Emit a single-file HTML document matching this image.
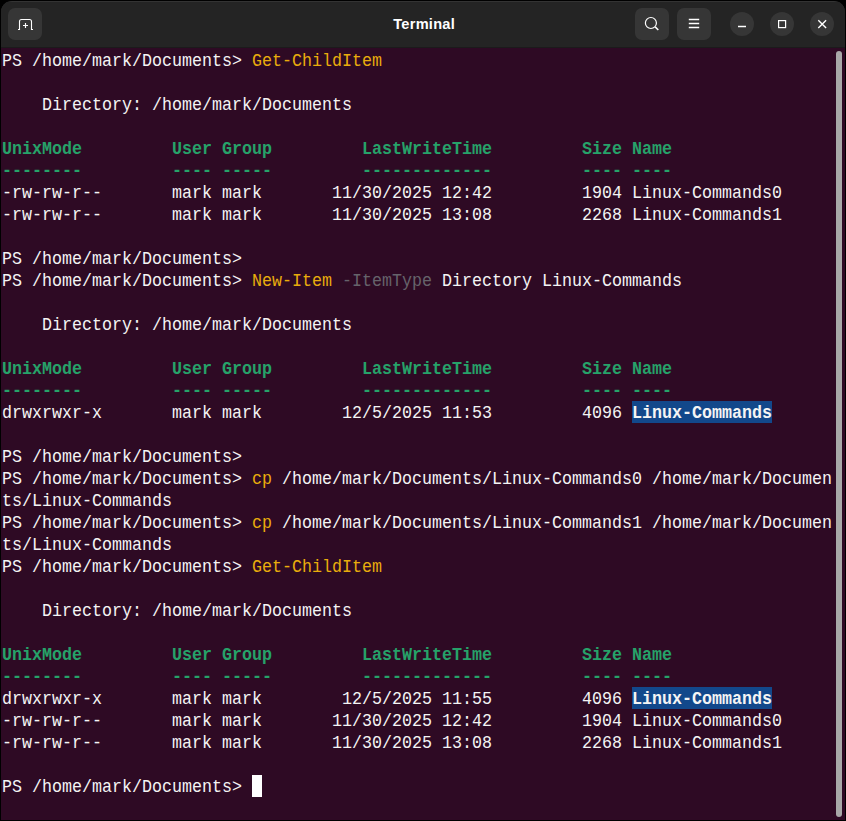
<!DOCTYPE html>
<html><head><meta charset="utf-8">
<style>
html,body{margin:0;padding:0;background:#000;width:846px;height:821px;overflow:hidden}
#win{position:absolute;left:1px;top:1px;width:844px;height:819px;background:#242424;border-radius:11px 11px 0 0;overflow:hidden;box-shadow:inset 0 1px rgba(255,255,255,0.07)}
#tbg{position:absolute;left:0;top:47px;width:844px;height:772px;background:#2e0a24}
#hdr{position:absolute;left:0;top:1px;width:844px;height:45px;background:#242424;border-bottom:1px solid #1b1b1b}
.btn{position:absolute;top:6px;width:34px;height:32px;border-radius:7px;background:#363636}
.circ{position:absolute;top:10px;width:24px;height:24px;border-radius:50%;background:#363636}
#title{position:absolute;left:1px;width:844px;top:13px;text-align:center;font:bold 14.6px "Liberation Sans",sans-serif;letter-spacing:0.25px;text-indent:0.25px;color:#fff;line-height:18px}
svg{position:absolute;left:0;top:0}
#term{position:absolute;left:-1px;top:-1px;width:846px;height:821px}
.t{position:absolute;font-family:"Liberation Mono",monospace;font-weight:normal;font-size:18px;line-height:22px;height:22px;white-space:pre;color:#f4f4f4;transform:scaleX(0.925926);transform-origin:0 0}
.g{color:#26a269;font-weight:bold}
.y{color:#e9ad0c}
.d{color:#66636b}
.h{font-weight:bold;z-index:2}
.hl{position:absolute;height:22px;background:#12488b;z-index:1}
.cur{position:absolute;width:10px;height:22px;background:#fff}
#sb{position:absolute;left:835px;top:50px;width:6px;height:766px;border-radius:3px;background:#a8a8a8}
</style></head><body>
<div id="win">
  <div id="tbg"></div>
  <div id="hdr">
    <div class="btn" style="left:7px"></div>
    <div class="btn" style="left:634px"></div>
    <div class="btn" style="left:676px"></div>
    <div class="circ" style="left:729px"></div>
    <div class="circ" style="left:769px"></div>
    <div class="circ" style="left:809px"></div>
    <div id="title">Terminal</div>
  </div>
  <div id="term">
<b class="t w" style="left:2px;top:50px">PS</b>
<b class="t w" style="left:32px;top:50px">/home/mark/Documents&gt;</b>
<b class="t y" style="left:252px;top:50px">Get-ChildItem</b>
<b class="t w" style="left:42px;top:94px">Directory:</b>
<b class="t w" style="left:152px;top:94px">/home/mark/Documents</b>
<b class="t g" style="left:2px;top:138px">UnixMode</b>
<b class="t g" style="left:172px;top:138px">User</b>
<b class="t g" style="left:222px;top:138px">Group</b>
<b class="t g" style="left:362px;top:138px">LastWriteTime</b>
<b class="t g" style="left:582px;top:138px">Size</b>
<b class="t g" style="left:632px;top:138px">Name</b>
<b class="t g" style="left:2px;top:160px">--------</b>
<b class="t g" style="left:172px;top:160px">----</b>
<b class="t g" style="left:222px;top:160px">-----</b>
<b class="t g" style="left:362px;top:160px">-------------</b>
<b class="t g" style="left:582px;top:160px">----</b>
<b class="t g" style="left:632px;top:160px">----</b>
<b class="t w" style="left:2px;top:182px">-rw-rw-r--</b>
<b class="t w" style="left:172px;top:182px">mark</b>
<b class="t w" style="left:222px;top:182px">mark</b>
<b class="t w" style="left:332px;top:182px">11/30/2025</b>
<b class="t w" style="left:442px;top:182px">12:42</b>
<b class="t w" style="left:582px;top:182px">1904</b>
<b class="t w" style="left:632px;top:182px">Linux-Commands0</b>
<b class="t w" style="left:2px;top:204px">-rw-rw-r--</b>
<b class="t w" style="left:172px;top:204px">mark</b>
<b class="t w" style="left:222px;top:204px">mark</b>
<b class="t w" style="left:332px;top:204px">11/30/2025</b>
<b class="t w" style="left:442px;top:204px">13:08</b>
<b class="t w" style="left:582px;top:204px">2268</b>
<b class="t w" style="left:632px;top:204px">Linux-Commands1</b>
<b class="t w" style="left:2px;top:248px">PS</b>
<b class="t w" style="left:32px;top:248px">/home/mark/Documents&gt;</b>
<b class="t w" style="left:2px;top:270px">PS</b>
<b class="t w" style="left:32px;top:270px">/home/mark/Documents&gt;</b>
<b class="t y" style="left:252px;top:270px">New-Item</b>
<b class="t d" style="left:342px;top:270px">-ItemType</b>
<b class="t w" style="left:442px;top:270px">Directory</b>
<b class="t w" style="left:542px;top:270px">Linux-Commands</b>
<b class="t w" style="left:42px;top:314px">Directory:</b>
<b class="t w" style="left:152px;top:314px">/home/mark/Documents</b>
<b class="t g" style="left:2px;top:358px">UnixMode</b>
<b class="t g" style="left:172px;top:358px">User</b>
<b class="t g" style="left:222px;top:358px">Group</b>
<b class="t g" style="left:362px;top:358px">LastWriteTime</b>
<b class="t g" style="left:582px;top:358px">Size</b>
<b class="t g" style="left:632px;top:358px">Name</b>
<b class="t g" style="left:2px;top:380px">--------</b>
<b class="t g" style="left:172px;top:380px">----</b>
<b class="t g" style="left:222px;top:380px">-----</b>
<b class="t g" style="left:362px;top:380px">-------------</b>
<b class="t g" style="left:582px;top:380px">----</b>
<b class="t g" style="left:632px;top:380px">----</b>
<b class="t w" style="left:2px;top:402px">drwxrwxr-x</b>
<b class="t w" style="left:172px;top:402px">mark</b>
<b class="t w" style="left:222px;top:402px">mark</b>
<b class="t w" style="left:342px;top:402px">12/5/2025</b>
<b class="t w" style="left:442px;top:402px">11:53</b>
<b class="t w" style="left:582px;top:402px">4096</b>
<b class="t h" style="left:632px;top:402px">Linux-Commands</b>
<i class="hl" style="left:632px;top:401px;width:140px"></i>
<b class="t w" style="left:2px;top:446px">PS</b>
<b class="t w" style="left:32px;top:446px">/home/mark/Documents&gt;</b>
<b class="t w" style="left:2px;top:468px">PS</b>
<b class="t w" style="left:32px;top:468px">/home/mark/Documents&gt;</b>
<b class="t y" style="left:252px;top:468px">cp</b>
<b class="t w" style="left:282px;top:468px">/home/mark/Documents/Linux-Commands0</b>
<b class="t w" style="left:652px;top:468px">/home/mark/Documen</b>
<b class="t w" style="left:2px;top:490px">ts/Linux-Commands</b>
<b class="t w" style="left:2px;top:512px">PS</b>
<b class="t w" style="left:32px;top:512px">/home/mark/Documents&gt;</b>
<b class="t y" style="left:252px;top:512px">cp</b>
<b class="t w" style="left:282px;top:512px">/home/mark/Documents/Linux-Commands1</b>
<b class="t w" style="left:652px;top:512px">/home/mark/Documen</b>
<b class="t w" style="left:2px;top:534px">ts/Linux-Commands</b>
<b class="t w" style="left:2px;top:556px">PS</b>
<b class="t w" style="left:32px;top:556px">/home/mark/Documents&gt;</b>
<b class="t y" style="left:252px;top:556px">Get-ChildItem</b>
<b class="t w" style="left:42px;top:600px">Directory:</b>
<b class="t w" style="left:152px;top:600px">/home/mark/Documents</b>
<b class="t g" style="left:2px;top:644px">UnixMode</b>
<b class="t g" style="left:172px;top:644px">User</b>
<b class="t g" style="left:222px;top:644px">Group</b>
<b class="t g" style="left:362px;top:644px">LastWriteTime</b>
<b class="t g" style="left:582px;top:644px">Size</b>
<b class="t g" style="left:632px;top:644px">Name</b>
<b class="t g" style="left:2px;top:666px">--------</b>
<b class="t g" style="left:172px;top:666px">----</b>
<b class="t g" style="left:222px;top:666px">-----</b>
<b class="t g" style="left:362px;top:666px">-------------</b>
<b class="t g" style="left:582px;top:666px">----</b>
<b class="t g" style="left:632px;top:666px">----</b>
<b class="t w" style="left:2px;top:688px">drwxrwxr-x</b>
<b class="t w" style="left:172px;top:688px">mark</b>
<b class="t w" style="left:222px;top:688px">mark</b>
<b class="t w" style="left:342px;top:688px">12/5/2025</b>
<b class="t w" style="left:442px;top:688px">11:55</b>
<b class="t w" style="left:582px;top:688px">4096</b>
<b class="t h" style="left:632px;top:688px">Linux-Commands</b>
<i class="hl" style="left:632px;top:687px;width:140px"></i>
<b class="t w" style="left:2px;top:710px">-rw-rw-r--</b>
<b class="t w" style="left:172px;top:710px">mark</b>
<b class="t w" style="left:222px;top:710px">mark</b>
<b class="t w" style="left:332px;top:710px">11/30/2025</b>
<b class="t w" style="left:442px;top:710px">12:42</b>
<b class="t w" style="left:582px;top:710px">1904</b>
<b class="t w" style="left:632px;top:710px">Linux-Commands0</b>
<b class="t w" style="left:2px;top:732px">-rw-rw-r--</b>
<b class="t w" style="left:172px;top:732px">mark</b>
<b class="t w" style="left:222px;top:732px">mark</b>
<b class="t w" style="left:332px;top:732px">11/30/2025</b>
<b class="t w" style="left:442px;top:732px">13:08</b>
<b class="t w" style="left:582px;top:732px">2268</b>
<b class="t w" style="left:632px;top:732px">Linux-Commands1</b>
<b class="t w" style="left:2px;top:776px">PS</b>
<b class="t w" style="left:32px;top:776px">/home/mark/Documents&gt;</b>
<i class="cur" style="left:252px;top:775px"></i>
  </div>
  <div id="sb"></div>
</div>
<svg width="846" height="821" viewBox="0 0 846 821" fill="none" stroke="#fff" stroke-width="1.3">
  <!-- new tab icon -->
  <path d="M18 29.5 H19.5 V21.5 A2 2 0 0 1 21.5 19.5 H29.5 A2 2 0 0 1 31.5 21.5 V29.5 H33" stroke-width="1.1"/>
  <path d="M25.5 23 V28 M23 25.5 H28" stroke-width="1.15"/>
  <!-- search -->
  <circle cx="650.9" cy="23" r="5.5" stroke-width="1.2"/>
  <path d="M655.2 26.9 l3.1 3.1" stroke-width="1.5"/>
  <!-- menu -->
  <path d="M688.8 19.5 h10.4 M688.8 23.5 h10.4 M688.8 27.5 h10.4" />
  <!-- minimize -->
  <path d="M738 26.5 h8" stroke-width="1.5"/>
  <!-- maximize -->
  <rect x="778.6" y="20.6" width="7" height="7" stroke-width="1.2"/>
  <!-- close -->
  <path d="M818.3 20.3 l7.8 7.8 M826.1 20.3 l-7.8 7.8" stroke-width="1.4"/>
</svg>
</body></html>
